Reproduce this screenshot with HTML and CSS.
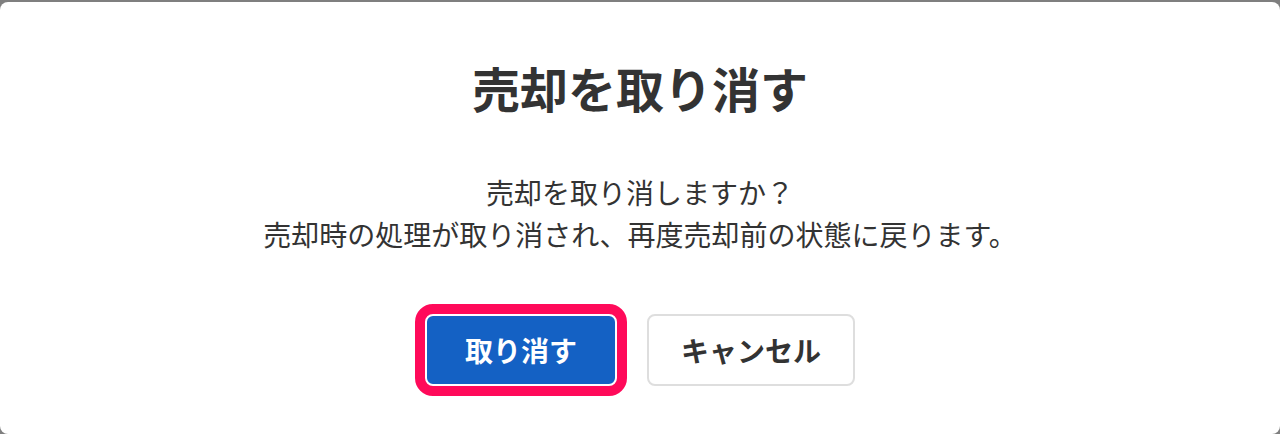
FILE: index.html
```html
<!DOCTYPE html>
<html lang="ja">
<head>
<meta charset="utf-8">
<title>売却を取り消す</title>
<link rel="stylesheet" href="styles.css">
</head>
<body>
<div class="modal">
  <h1 class="title">売却を取り消す</h1>
  <div class="message">
    <p>売却を取り消しますか？</p>
    <p>売却時の処理が取り消され、再度売却前の状態に戻ります。</p>
  </div>
  <div class="actions">
    <button class="btn btn-primary">取り消す</button>
    <button class="btn btn-secondary">キャンセル</button>
  </div>
</div>
</body>
</html>
```

FILE: styles.css
```css
html, body {
  margin: 0;
  padding: 0;
}
body {
  background: #7f7f7f;
  width: 1280px;
  height: 434px;
  overflow: hidden;
  font-family: "Noto Sans CJK JP", "Noto Sans", sans-serif;
  color: #333333;
}
.modal {
  margin-top: 2px;
  height: 432px;
  box-sizing: border-box;
  background: #ffffff;
  border-radius: 8px;
  padding-top: 49px;
  display: flex;
  flex-direction: column;
  align-items: center;
}
.title {
  margin: 0;
  font-size: 48px;
  line-height: 72px;
  font-weight: 700;
  color: #333333;
}
.message {
  margin-top: 48px;
  text-align: center;
  font-size: 28px;
  line-height: 42px;
}
.message p {
  margin: 0;
}
.actions {
  margin-top: 59px;
  display: flex;
  gap: 30px;
}
.btn {
  height: 72px;
  box-sizing: border-box;
  border-radius: 8px;
  font-family: "Noto Sans CJK JP", "Noto Sans", sans-serif;
  font-size: 28px;
  font-weight: 700;
  padding: 0;
  cursor: pointer;
}
.btn-primary {
  width: 192px;
  background: #1461c4;
  color: #ffffff;
  border: 2px solid #ffffff;
  outline: 10px solid #ff0a5a;
  outline-offset: 0;
}
.btn-secondary {
  width: 208px;
  background: #ffffff;
  color: #333333;
  border: 2px solid #dedede;
}
```
